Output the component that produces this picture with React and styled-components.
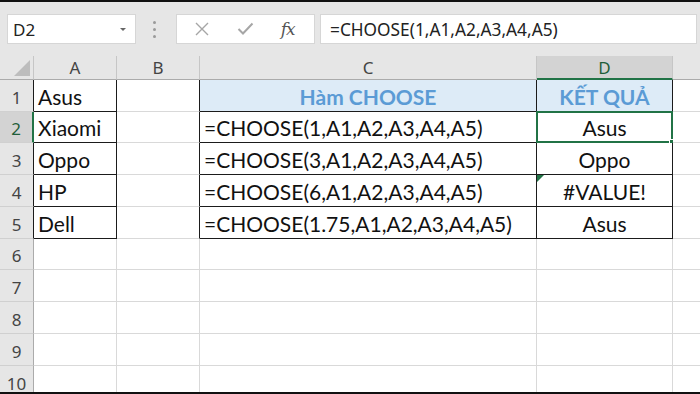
import React from 'react'
import styled, { createGlobalStyle } from 'styled-components'

const GlobalStyle = createGlobalStyle`
  html, body { margin: 0; padding: 0; background: #fff; overflow: hidden; }
  * { box-sizing: border-box; }
`

const GREEN = '#217346'
const GRID = '#d9d9d9'
const DARK = '#1b1b1b'

const cols = [
  { key: 'A', width: 83 },
  { key: 'B', width: 83 },
  { key: 'C', width: 337 },
  { key: 'D', width: 136 },
  { key: 'E', width: 28 },
]
const rowHeights = [32, 31, 32, 32, 32, 31, 32, 32, 32, 32]

const data = {
  1: { A: 'Asus', C: 'Hàm CHOOSE', D: 'KẾT QUẢ' },
  2: { A: 'Xiaomi', C: '=CHOOSE(1,A1,A2,A3,A4,A5)', D: 'Asus' },
  3: { A: 'Oppo', C: '=CHOOSE(3,A1,A2,A3,A4,A5)', D: 'Oppo' },
  4: { A: 'HP', C: '=CHOOSE(6,A1,A2,A3,A4,A5)', D: '#VALUE!' },
  5: { A: 'Dell', C: '=CHOOSE(1.75,A1,A2,A3,A4,A5)', D: 'Asus' },
}

const Frame = styled.div`
  width: 700px;
  height: 394px;
  border-top: 2px solid #111;
  border-bottom: 2px solid #111;
  background: #fff;
  display: flex;
  flex-direction: column;
  overflow: hidden;
`

const Toolbar = styled.div`
  height: 54px;
  flex: none;
  background: #e6e6e6;
  display: flex;
  align-items: center;
  padding: 0 3px 0 7px;
  font-family: "Noto Sans", "Open Sans", sans-serif;
`

const NameBox = styled.div`
  width: 129px;
  height: 30px;
  background: #fff;
  border: 1px solid #d6d6d6;
  display: flex;
  align-items: center;
  justify-content: space-between;
  padding: 0 9px 0 5px;
  font-size: 17px;
  color: #222;
`

const Caret = styled.span`
  width: 0;
  height: 0;
  border-left: 3px solid transparent;
  border-right: 3px solid transparent;
  border-top: 3px solid #666;
`

const Grip = styled.div`
  width: 40px;
  display: flex;
  flex-direction: column;
  align-items: center;
  gap: 4px;
  padding-right: 4px;
  span {
    width: 3px;
    height: 3px;
    border-radius: 50%;
    background: #9a9a9a;
  }
`

const FxBox = styled.div`
  width: 139px;
  height: 30px;
  background: #fff;
  border: 1px solid #d6d6d6;
  display: flex;
  align-items: center;
  justify-content: space-around;
  padding: 0 6px 0 4px;
`

const FxText = styled.span`
  font-family: "DejaVu Serif", "Liberation Serif", serif;
  font-style: italic;
  font-size: 17px;
  color: #555;
  letter-spacing: -1px;
`

const FormulaBar = styled.div`
  flex: 1;
  margin-left: 5px;
  height: 30px;
  background: #fff;
  border: 1px solid #d6d6d6;
  display: flex;
  align-items: center;
  padding-left: 9px;
  font-size: 17.3px;
  color: #222;
`

const Sheet = styled.div`
  flex: 1;
  display: grid;
  grid-template-columns: 34px ${cols.map(c => c.width + 'px').join(' ')};
  grid-template-rows: 24px ${rowHeights.map(h => h + 'px').join(' ')};
  font-family: "Noto Sans", "Open Sans", sans-serif;
`

const Corner = styled.div`
  background: #e6e6e6;
  border-right: 1px solid #c6c6c6;
  border-bottom: 1px solid #ababab;
  display: flex;
  align-items: flex-end;
  justify-content: flex-end;
  padding: 0 3px 3px 0;
`

const ColHead = styled.div`
  background: ${p => (p.$active ? '#d3d3d3' : '#e6e6e6')};
  border-right: 1px solid #c6c6c6;
  border-bottom: ${p => (p.$active ? `2px solid ${GREEN}` : '1px solid #ababab')};
  display: flex;
  align-items: center;
  justify-content: center;
  font-size: 17px;
  color: ${p => (p.$active ? '#1f5e3a' : '#444')};
  padding-top: ${p => (p.$active ? '1px' : '0')};
`

const RowHead = styled.div`
  background: ${p => (p.$active ? '#d3d3d3' : '#e6e6e6')};
  border-right: ${p => (p.$active ? `2px solid ${GREEN}` : p.$dark ? `1px solid ${DARK}` : '1px solid #ababab')};
  border-bottom: 1px solid #d0d0d0;
  display: flex;
  align-items: center;
  justify-content: center;
  padding-top: 3px;
  font-size: 17px;
  color: ${p => (p.$active ? '#1f5e3a' : '#444')};
`

const Cell = styled.div`
  position: relative;
  border-right: 1px solid ${p => (p.$darkRight ? DARK : GRID)};
  border-bottom: 1px solid ${p => (p.$darkBottom ? DARK : GRID)};
  background: ${p => (p.$head ? '#ddebf7' : '#fff')};
  display: flex;
  align-items: flex-end;
  justify-content: ${p => (p.$center ? 'center' : 'flex-start')};
  padding: 0 4px 2px 4px;
  font-family: Lato, "Open Sans", sans-serif;
  font-size: 21px;
  font-weight: ${p => (p.$head ? 700 : 400)};
  color: ${p => (p.$head ? '#5b9bd5' : '#111')};
  white-space: nowrap;
  overflow: visible;
`

const Selection = styled.div`
  position: absolute;
  left: -1px;
  top: -1px;
  right: -1px;
  bottom: -1px;
  border: 2px solid ${GREEN};
  pointer-events: none;
`

const Handle = styled.div`
  position: absolute;
  right: -4px;
  bottom: -4px;
  width: 6px;
  height: 6px;
  background: ${GREEN};
  border: 1px solid #fff;
`

const ErrorMark = styled.div`
  position: absolute;
  left: 0;
  top: 0;
  width: 0;
  height: 0;
  border-top: 7px solid ${GREEN};
  border-right: 7px solid transparent;
`

const CloseIcon = () => (
  <svg width="16" height="16" viewBox="0 0 16 16">
    <path d="M2 2 L14 14 M14 2 L2 14" stroke="#a6a6a6" strokeWidth="1.4" fill="none" />
  </svg>
)

const CheckIcon = () => (
  <svg width="17" height="14" viewBox="0 0 17 14">
    <path d="M1.5 7 L6 11.5 L15.5 1.5" stroke="#a6a6a6" strokeWidth="2" fill="none" />
  </svg>
)

const SelectAll = () => (
  <svg width="16" height="16" viewBox="0 0 16 16">
    <path d="M16 0 L16 16 L0 16 Z" fill="#bdbdbd" />
  </svg>
)

const inTable = r => r >= 1 && r <= 5

export default function App() {
  return (
    <>
      <GlobalStyle />
      <Frame>
        <Toolbar>
          <NameBox>
            <span>D2</span>
            <Caret />
          </NameBox>
          <Grip>
            <span />
            <span />
            <span />
          </Grip>
          <FxBox>
            <CloseIcon />
            <CheckIcon />
            <FxText>fx</FxText>
          </FxBox>
          <FormulaBar>=CHOOSE(1,A1,A2,A3,A4,A5)</FormulaBar>
        </Toolbar>
        <Sheet>
          <Corner>
            <SelectAll />
          </Corner>
          {cols.map(c => (
            <ColHead key={c.key} $active={c.key === 'D'}>
              {c.key === 'E' ? '' : c.key}
            </ColHead>
          ))}
          {rowHeights.map((h, i) => {
            const r = i + 1
            const row = data[r] || {}
            return (
              <React.Fragment key={r}>
                <RowHead $active={r === 2} $dark={inTable(r)}>
                  {r}
                </RowHead>
                {cols.map(c => {
                  const t = inTable(r)
                  const darkRight = t && c.key !== 'E'
                  const darkBottom = t && c.key !== 'B' && c.key !== 'E'
                  return (
                    <Cell
                      key={c.key}
                      $darkRight={darkRight}
                      $darkBottom={darkBottom}
                      $head={r === 1 && (c.key === 'C' || c.key === 'D')}
                      $center={c.key === 'D' || (r === 1 && c.key === 'C')}
                    >
                      {row[c.key]}
                      {r === 4 && c.key === 'D' && <ErrorMark />}
                      {r === 2 && c.key === 'D' && (
                        <Selection>
                          <Handle />
                        </Selection>
                      )}
                    </Cell>
                  )
                })}
              </React.Fragment>
            )
          })}
        </Sheet>
      </Frame>
    </>
  )
}
